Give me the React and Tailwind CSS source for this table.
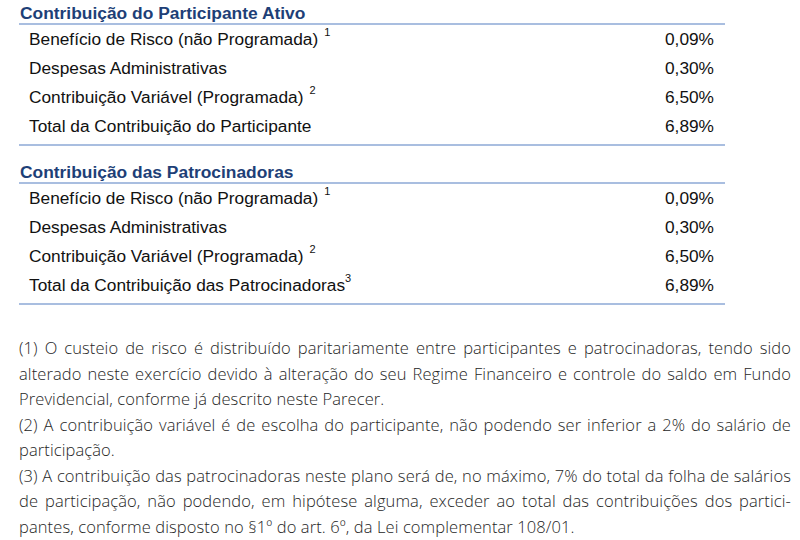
const sections = [
  {
    title: "Contribuição do Participante Ativo",
    rows: [
      { label: "Benefício de Risco (não Programada)", note: "1", gap: true, value: "0,09%" },
      { label: "Despesas Administrativas", value: "0,30%" },
      { label: "Contribuição Variável (Programada)", note: "2", gap: true, value: "6,50%" },
      { label: "Total da Contribuição do Participante", value: "6,89%" },
    ],
  },
  {
    title: "Contribuição das Patrocinadoras",
    rows: [
      { label: "Benefício de Risco (não Programada)", note: "1", gap: true, value: "0,09%" },
      { label: "Despesas Administrativas", value: "0,30%" },
      { label: "Contribuição Variável (Programada)", note: "2", gap: true, value: "6,50%" },
      { label: "Total da Contribuição das Patrocinadoras", note: "3", value: "6,89%" },
    ],
  },
];

// lines are broken as in the printed report; justified ones stretch to full width
const notes = [
  { text: "(1) O custeio de risco é distribuído paritariamente entre participantes e patrocinadoras, tendo sido", justify: true },
  { text: "alterado neste exercício devido à alteração do seu Regime Financeiro e controle do saldo em Fundo", justify: true },
  { text: "Previdencial, conforme já descrito neste Parecer." },
  { text: "(2) A contribuição variável é de escolha do participante, não podendo ser inferior a 2% do salário de", justify: true },
  { text: "participação." },
  { text: "(3) A contribuição das patrocinadoras neste plano será de, no máximo, 7% do total da folha de salários", justify: true },
  { text: "de participação, não podendo, em hipótese alguma, exceder ao total das contribuições dos partici-", justify: true },
  { text: "pantes, conforme disposto no §1º do art. 6º, da Lei complementar 108/01." },
];

function Section({ section, className }) {
  return (
    <div className={className}>
      {/* Header */}
      <div className="h-[24px] pt-[2px] border-b-2 border-[#a9bee0] pl-px text-[17.4px] leading-[20px] font-bold text-[#1e3f77]">
        {section.title}
      </div>

      {/* Rows */}
      <div className="border-b-2 border-[#a9bee0] pb-[3px]">
        {section.rows.map((row, index) => (
          <div key={index} className="flex h-[29px] items-center justify-between pl-[10px] pr-[11px] text-[17.3px] text-[#111]">
            <span>
              {row.label}
              {row.note && (
                <sup className={`text-[11px] relative -top-[9px] ${row.gap ? "ml-[6px]" : ""}`}>{row.note}</sup>
              )}
            </span>
            <span>{row.value}</span>
          </div>
        ))}
      </div>
    </div>
  );
}

export default function App() {
  return (
    <div className="w-[800px] h-[540px] bg-white overflow-hidden pt-[1px] pl-[19px] pr-[9px] font-['Liberation_Sans',Arial,sans-serif]">
      <div className="w-[706px]">
        <Section section={sections[0]} />
        <Section section={sections[1]} className="mt-[14px]" />
      </div>

      {/* Footnotes */}
      <div className="mt-[30px] font-['Open_Sans',sans-serif] font-light text-[16.5px] leading-[25.5px] tracking-[0.1px] text-[#262626]">
        {notes.map((line, index) => (
          <div
            key={index}
            className={line.justify ? "text-justify [text-align-last:justify]" : ""}
          >
            {line.text}
          </div>
        ))}
      </div>
    </div>
  );
}
